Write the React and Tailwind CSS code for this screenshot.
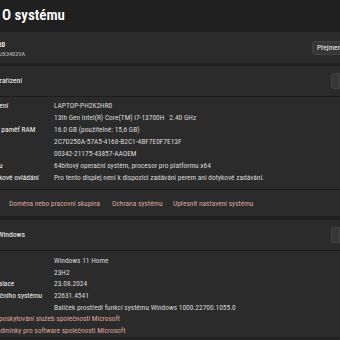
export default function App() {
  const specs = [
    ["Název zařízení", "LAPTOP-PH2K2HR0"],
    ["Procesor", "13th Gen Intel(R) Core(TM) i7-13700H\u00a0\u00a0\u00a02.40 GHz"],
    ["Instalovaná paměť RAM", "16.0 GB (použitelné: 15,6 GB)"],
    ["ID zařízení", "2C7D250A-57A5-4168-B2C1-4BF7E0F7E13F"],
    ["ID produktu", "00342-21175-43857-AAOEM"],
    ["Typ systému", "64bitový operační systém, procesor pro platformu x64"],
    ["Pero a dotykové ovládání", "Pro tento displej není k dispozici zadávání perem ani dotykové zadávání."],
  ];
  const win = [
    ["Edice", "Windows 11 Home"],
    ["Verze", "23H2"],
    ["Datum instalace", "23.08.2024"],
    ["Build operačního systému", "22631.4541"],
    ["Prostředí", "Balíček prostředí funkcí systému Windows 1000.22700.1055.0"],
  ];
  return (
    <div className="w-[340px] h-[340px] overflow-hidden bg-[#202020] text-white font-['Roboto_Condensed','Roboto',sans-serif]">
      <div className="h-[32px] pl-[2px] pt-[5px] text-[15px] leading-[20px] font-semibold whitespace-nowrap">O systému</div>

      <div className="h-[31px] bg-[#2b2b2b] grid grid-cols-[312px_1fr] items-center">
        <div className="flex flex-col pt-[1px]">
          <div className="w-[5px] flex justify-end whitespace-nowrap text-[7.6px] leading-[11px] font-semibold">LAPTOP-PH2K2HR0</div>
          <div className="w-[25px] flex justify-end whitespace-nowrap text-[6.2px] leading-[8px] text-[#c4c4c4]">Zenbook 14 UX3402VA_UX3402VA</div>
        </div>
        <div className="h-[14px] bg-[#373737] border border-[#424242] rounded-l-[3px] pl-[4px] flex items-center whitespace-nowrap text-[7.4px] text-[#f0f0f0]">Přejmenovat tento počítač</div>
      </div>

      <div className="mt-[3px] bg-[#2b2b2b] flex flex-col">
        <div className="h-[31px] grid grid-cols-[331px_1fr] items-center border-b border-[#1d1d1d]">
          <div className="w-[22px] flex justify-end whitespace-nowrap text-[7.6px] leading-[10px]">Specifikace zařízení</div>
          <div className="h-[16px] bg-[#373737] border border-[#424242] rounded-l-[3px]"></div>
        </div>
        <div className="-ml-[34px] pt-[3px] pb-[5px] flex flex-col">
          {specs.map(([l, v]) => (
            <div key={l} className="h-[12px] grid grid-cols-[88px_1fr] items-center whitespace-nowrap text-[7.4px] leading-[12px]">
              <span className="text-[#f4f4f4]">{l}</span>
              <span className="text-[#d8d8d8]">{v}</span>
            </div>
          ))}
        </div>
        <div className="h-[27px] border-t border-[#1d1d1d] pl-[9px] pt-[1px] grid grid-cols-[103px_61px_auto] items-center whitespace-nowrap text-[7.4px] text-[#dca69d]">
          <span>Doména nebo pracovní skupina</span>
          <span>Ochrana systému</span>
          <span>Upřesnit nastavení systému</span>
        </div>
      </div>

      <div className="mt-[4px] bg-[#2b2b2b] flex flex-col">
        <div className="h-[31px] grid grid-cols-[331px_1fr] items-center border-b border-[#1d1d1d]">
          <div className="w-[25px] flex justify-end whitespace-nowrap text-[7.6px] leading-[10px]">Specifikace systému Windows</div>
          <div className="h-[16px] bg-[#373737] border border-[#424242] rounded-l-[3px]"></div>
        </div>
        <div className="-ml-[33px] pt-[4px] flex flex-col">
          {win.map(([l, v]) => (
            <div key={l} className="h-[11.7px] grid grid-cols-[87px_1fr] items-center whitespace-nowrap text-[7.4px] leading-[11.7px]">
              <span className="text-[#f4f4f4]">{l}</span>
              <span className="text-[#d8d8d8]">{v}</span>
            </div>
          ))}
          <div className="h-[11.7px] whitespace-nowrap text-[7.4px] leading-[11.7px] text-[#dca69d]">Smlouva o poskytování služeb společnosti Microsoft</div>
          <div className="h-[11.7px] whitespace-nowrap text-[7.4px] leading-[11.7px] text-[#dca69d]">Licenční podmínky pro software společnosti Microsoft</div>
        </div>
      </div>
    </div>
  );
}
